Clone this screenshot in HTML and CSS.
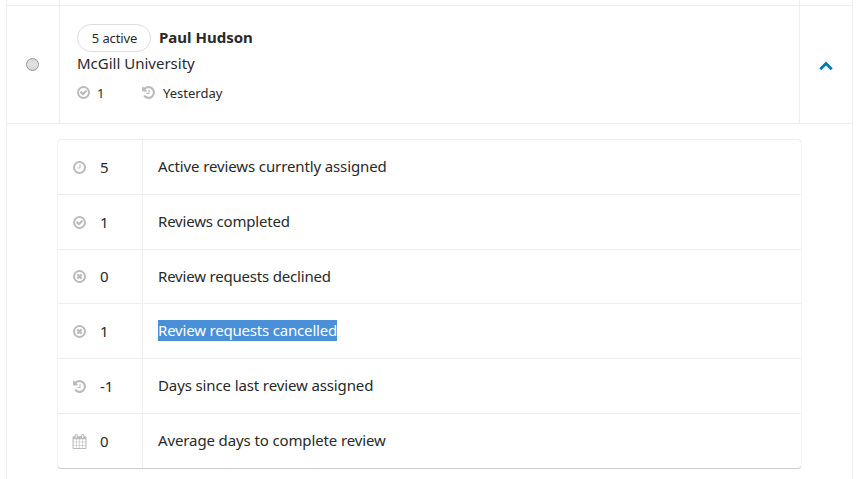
FILE: index.html
```html
<!DOCTYPE html>
<html lang="en">
<head>
<meta charset="utf-8">
<title>Reviewers</title>
<link rel="stylesheet" href="styles.css">
</head>
<body>
<svg class="sprite" aria-hidden="true">
  <symbol id="ring" viewBox="0 0 1792 1792"><circle cx="896" cy="896" r="656" fill="none" stroke="currentColor" stroke-width="240"/></symbol>
  <symbol id="check" viewBox="0 0 1792 1792"><use href="#ring"/><path d="M1299 813l-422 422q-19 19-45 19t-45-19l-294-294q-19-19-19-45t19-45l102-102q19-19 45-19t45 19l147 147 275-275q19-19 45-19t45 19l102 102q19 19 19 45t-19 45z"/></symbol>
  <symbol id="clock" viewBox="0 0 1792 1792"><use href="#ring"/><path d="M1024 544v448q0 14-9 23t-23 9h-320q-14 0-23-9t-9-23v-64q0-14 9-23t23-9h224v-352q0-14 9-23t23-9h64q14 0 23 9t9 23z"/></symbol>
  <symbol id="times" viewBox="0 0 1792 1792"><use href="#ring"/><path d="M1225 1079l-146 146q-10 10-23 10t-23-10l-137-137-137 137q-10 10-23 10t-23-10l-146-146q-10-10-10-23t10-23l137-137-137-137q-10-10-10-23t10-23l146-146q10-10 23-10t23 10l137 137 137-137q10-10 23-10t23 10l146 146q10 10 10 23t-10 23l-137 137 137 137q10 10 10 23t-10 23z"/></symbol>
  <symbol id="history" viewBox="0 0 1792 1792"><path d="M1664 896q0 156-61 298t-164 245-245 164-298 61q-172 0-327-72.500t-264-204.500q-7-10-6.500-22.500t8.500-20.500l137-138q10-9 25-9 16 2 23 12 73 95 179 147t225 52q104 0 198.500-40.500t163.500-109.500 109.500-163.500 40.500-198.500-40.500-198.500-109.500-163.500-163.500-109.500-198.500-40.500q-98 0-188 35.500t-160 101.500l137 138q31 30 14 69-17 40-59 40h-448q-26 0-45-19t-19-45v-448q0-42 40-59 39-17 69 14l130 129q107-101 244.500-156.500t284.500-55.500q156 0 298 61t245 164 164 245 61 298zm-640-288v448q0 14-9 23t-23 9h-320q-14 0-23-9t-9-23v-64q0-14 9-23t23-9h224v-352q0-14 9-23t23-9h64q14 0 23 9t9 23z"/></symbol>
  <symbol id="calendar" viewBox="0 0 1792 1792"><path d="M192 1664h288v-288h-288v288zm352 0h320v-288h-320v288zm-352-352h288v-320h-288v320zm352 0h320v-320h-320v320zm-352-384h288v-288h-288v288zm736 736h320v-288h-320v288zm-384-736h320v-288h-320v288zm768 736h288v-288h-288v288zm-384-352h320v-320h-320v320zm-352-864v-288q0-13-9.500-22.500t-22.500-9.500h-64q-13 0-22.500 9.500t-9.500 22.500v288q0 13 9.500 22.500t22.500 9.500h64q13 0 22.500-9.500t9.500-22.500zm736 864h288v-320h-288v320zm-384-384h320v-288h-320v288zm384 0h288v-288h-288v288zm32-480v-288q0-13-9.500-22.500t-22.500-9.500h-64q-13 0-22.500 9.500t-9.500 22.500v288q0 13 9.500 22.500t22.500 9.500h64q13 0 22.500-9.500t9.500-22.500zm384-64v1280q0 52-38 90t-90 38h-1408q-52 0-90-38t-38-90v-1280q0-52 38-90t90-38h128v-96q0-66 47-113t113-47h64q66 0 113 47t47 113v96h384v-96q0-66 47-113t113-47h64q66 0 113 47t47 113v96h128q52 0 90 38t38 90z"/></symbol>
</svg>
<main class="list">
  <div class="row previous"><div class="select"></div><div class="summary"></div><div class="toggle"></div></div>
  <div class="row reviewer">
    <div class="select"><span class="radio"></span></div>
    <div class="summary">
      <div class="heading"><span class="badge">5 active</span><strong>Paul Hudson</strong></div>
      <div class="affiliation">McGill University</div>
      <div class="meta">
        <span class="completed"><svg class="icon"><use href="#check"/></svg>1</span>
        <span class="last"><svg class="icon"><use href="#history"/></svg>Yesterday</span>
      </div>
    </div>
    <div class="toggle"><svg class="chevron" viewBox="0 0 14 10"><path d="M1.300 8.200 7 2.500l5.700 5.700"/></svg></div>
  </div>
  <div class="details">
    <div class="stat"><div class="count"><svg class="icon"><use href="#clock"/></svg>5</div><div class="label">Active reviews currently assigned</div></div>
    <div class="stat"><div class="count"><svg class="icon"><use href="#check"/></svg>1</div><div class="label tight">Reviews completed</div></div>
    <div class="stat short"><div class="count"><svg class="icon"><use href="#times"/></svg>0</div><div class="label tight">Review requests declined</div></div>
    <div class="stat"><div class="count"><svg class="icon"><use href="#times"/></svg>1</div><div class="label tight"><span class="selected">Review requests cancelled</span></div></div>
    <div class="stat"><div class="count"><svg class="icon"><use href="#history"/></svg>-1</div><div class="label">Days since last review assigned</div></div>
    <div class="stat"><div class="count"><svg class="icon"><use href="#calendar"/></svg>0</div><div class="label">Average days to complete review</div></div>
  </div>
</main>
</body>
</html>
```
FILE: styles.css
```css
* { box-sizing: border-box; }
body {
  margin: 0;
  height: 479px;
  overflow: hidden;
  background: #fff;
  color: #292929;
  font: 15px/22px "Noto Sans", sans-serif;
}
.sprite { display: block; width: 0; height: 0; }
.list {
  width: 847px;
  height: 479px;
  margin-left: 6px;
  border: solid #eee;
  border-width: 0 1px;
}
.row { display: grid; grid-template-columns: 53px 740px 1fr; border-bottom: 1px solid #eee; }
.previous { height: 6px; }
.reviewer { height: 118px; }
.select { display: flex; align-items: center; justify-content: center; border-right: 1px solid #eee; }
.reviewer .select { padding-right: 1px; }
.summary { border-right: 1px solid #eee; }
.reviewer .summary { padding: 18px 17px; }
.toggle { display: flex; align-items: center; justify-content: center; }
.reviewer .toggle { padding-top: 2px; }
.radio {
  width: 13px;
  height: 13px;
  border: 1px solid #999;
  border-radius: 50%;
  background: linear-gradient(#d8d8d8, #e2e2e2 50%, #d5d5d5);
}
.heading { display: flex; align-items: center; gap: 8px; height: 28px; }
.heading strong { line-height: 26px; padding-bottom: 2px; }
.badge {
  width: 74px;
  height: 28px;
  padding-left: 1px;
  border: 1px solid #ddd;
  border-radius: 14px;
  text-align: center;
  font-size: 13px;
  line-height: 27px;
  letter-spacing: -.12px;
}
.affiliation { height: 22px; }
.meta { display: flex; height: 20px; margin-top: 9px; font-size: 13px; line-height: 20px; }
.meta span { display: flex; align-items: center; }
.meta .icon { margin: -1px 6px 0 -1px; }
.meta .last .icon { margin-right: 7px; }
.completed { width: 65px; }
.icon { width: 15px; height: 15px; flex: none; color: #bbb; fill: currentColor; }
.chevron { width: 14px; height: 10px; fill: none; stroke: #007ab2; stroke-width: 2.800; }
.details {
  display: grid;
  grid-template-rows: 55px 55px 54px 55px 55px 54px;
  width: 743px;
  margin: 16px 0 0 51px;
  border-radius: 3px;
  box-shadow: 0 -1px 0 #eee, 0 0 1px rgba(0, 0, 0, .25), 0 1px 1px rgba(0, 0, 0, .18);
}
.stat { display: grid; grid-template-columns: 85px 1fr; border-bottom: 1px solid #eee; }
.stat:last-child { border-bottom: 0; }
.count { display: flex; align-items: center; padding-left: 15px; border-right: 1px solid #eee; }
.count .icon { margin: 1px 13px 0 -1px; }
.short .count { padding-bottom: 1px; }
.label { display: flex; align-items: center; padding: 0 0 2px 15px; letter-spacing: -.12px; }
.label.tight { letter-spacing: -.19px; }
.selected { color: #fff; background: #4a90d9; line-height: 21px; }
```
